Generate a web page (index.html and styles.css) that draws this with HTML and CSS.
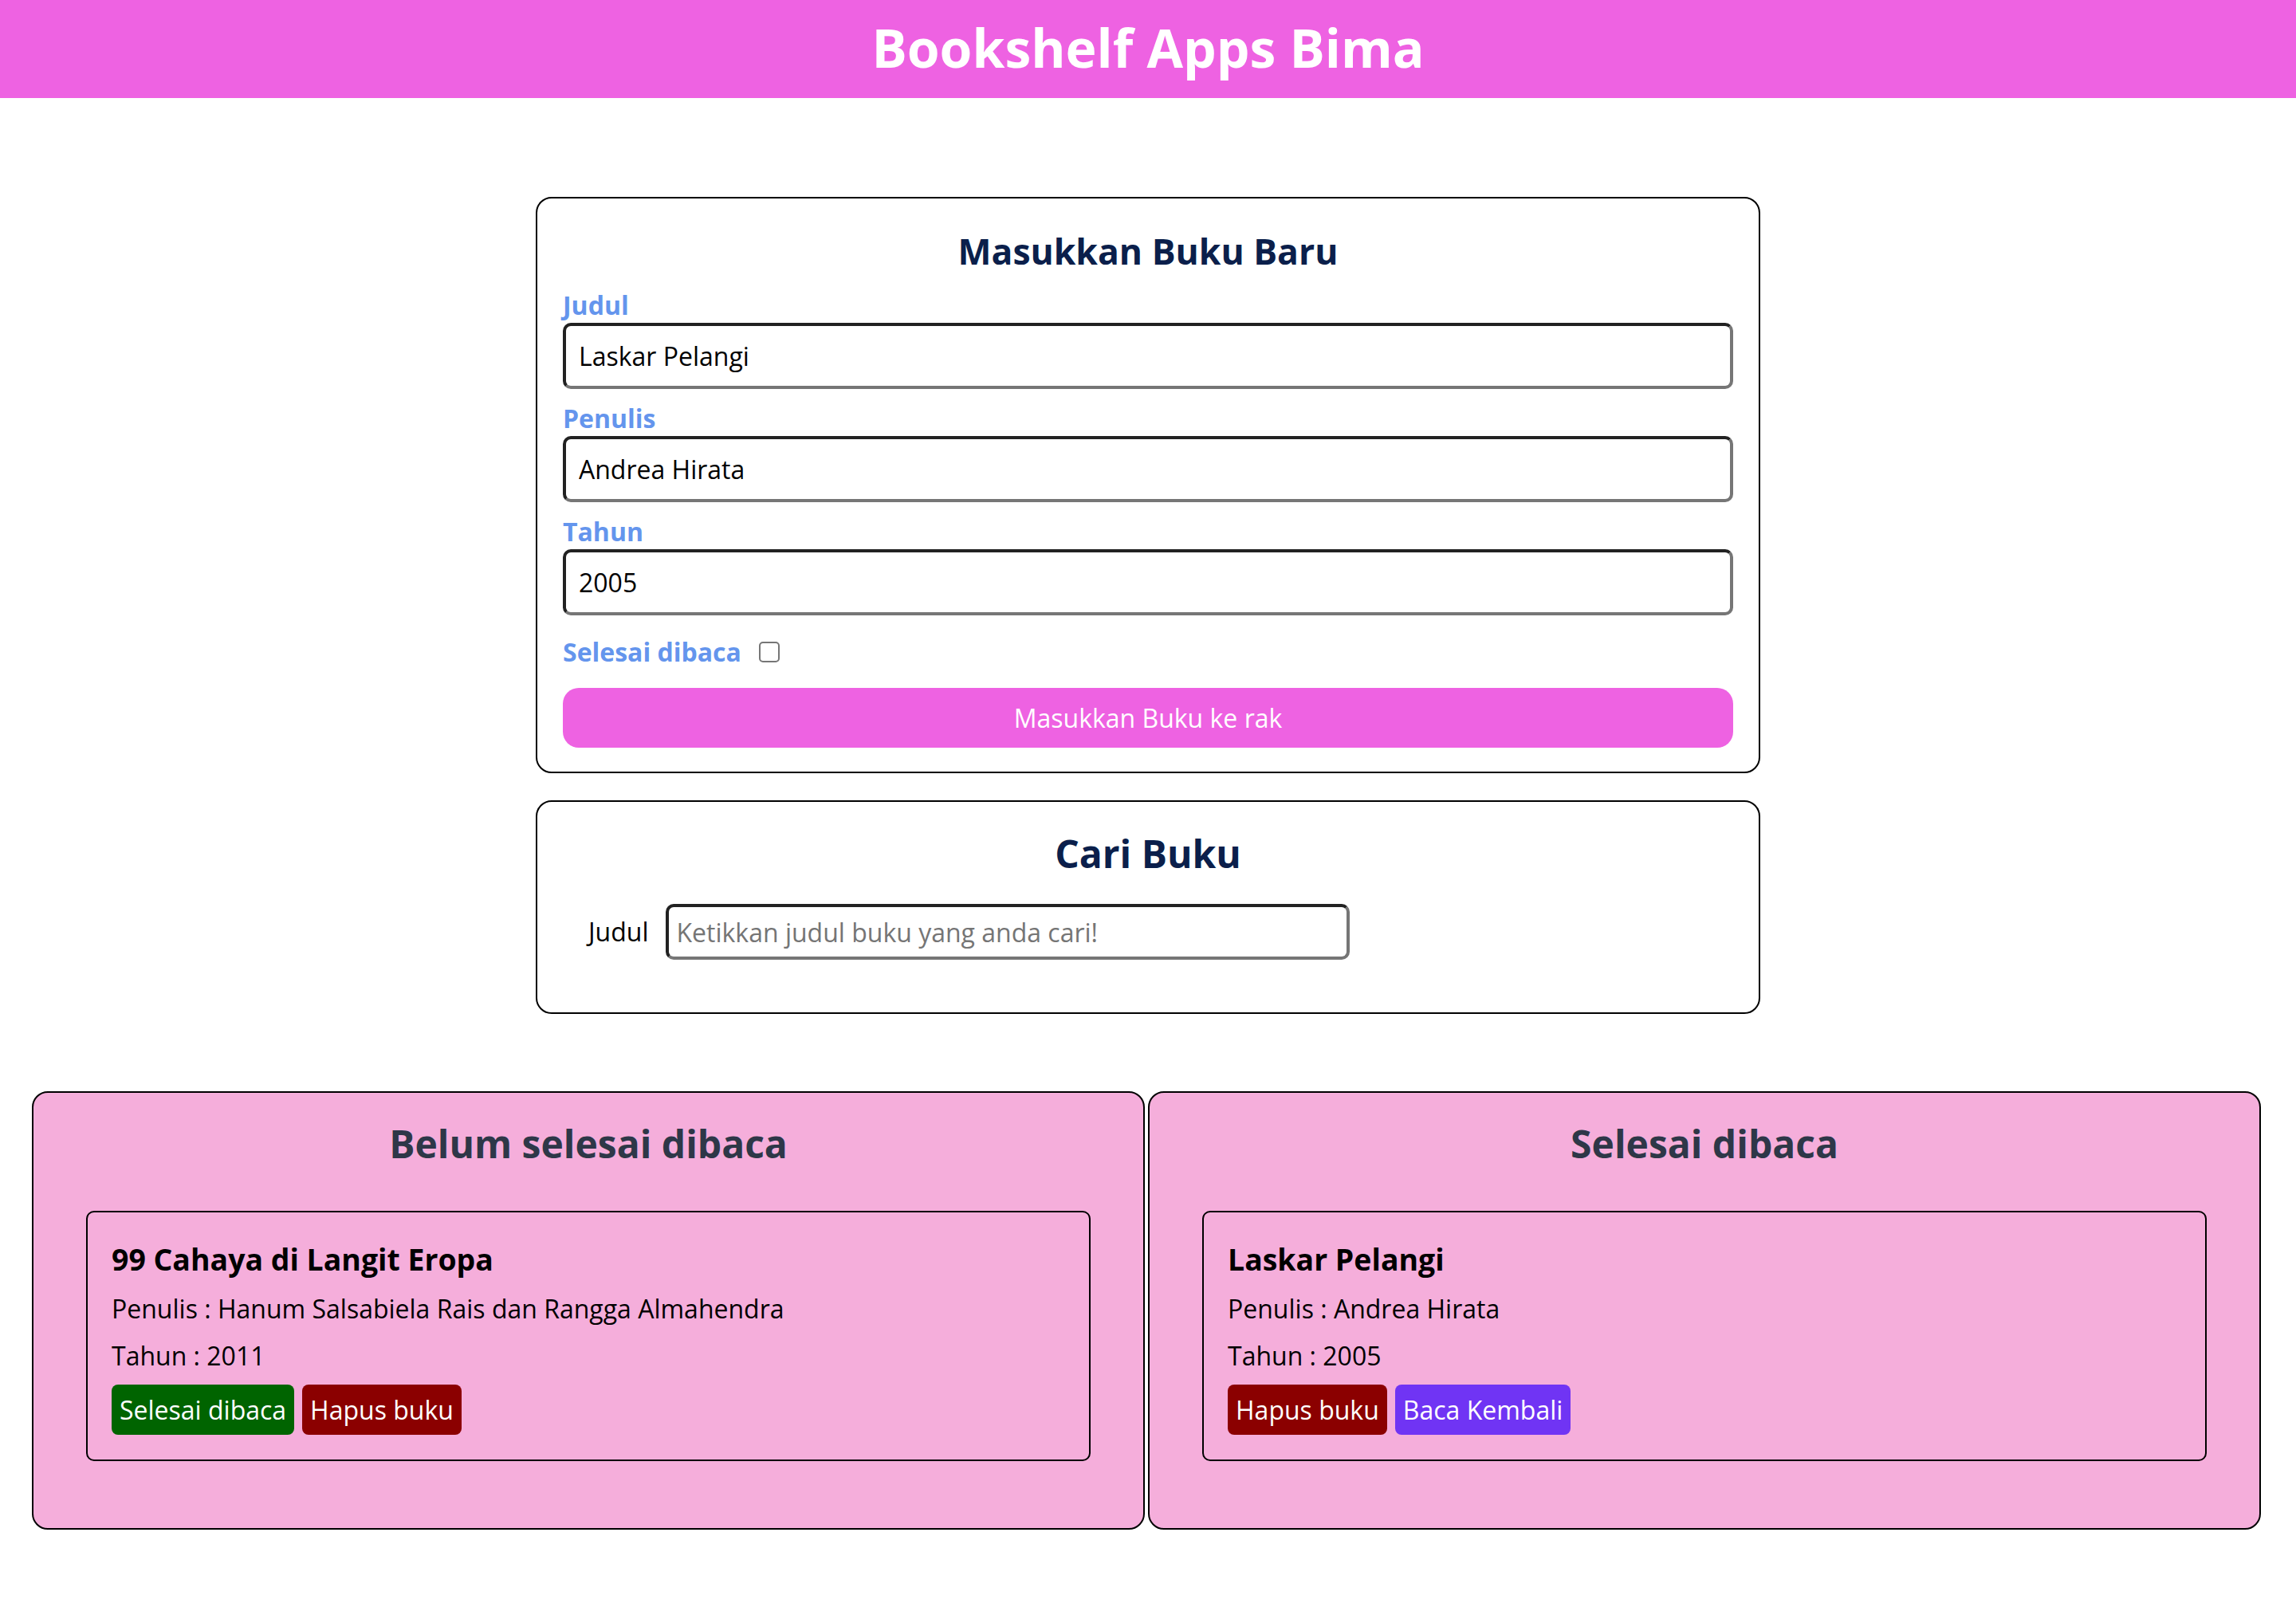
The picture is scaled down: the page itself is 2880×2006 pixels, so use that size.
FILE: index.html
```html
<!DOCTYPE html>
<html lang="id">
<head>
<meta charset="utf-8">
<title>Bookshelf Apps Bima</title>
<link rel="stylesheet" href="styles.css">
</head>
<body>
<header class="app-header">
  <h1 class="app-title">Bookshelf Apps Bima</h1>
</header>
<main class="main">
  <section class="card form-card">
    <h2 class="card-title form-title">Masukkan Buku Baru</h2>
    <form class="book-form">
      <label class="field-label" for="judul">Judul</label>
      <input class="text-input" id="judul" type="text" value="Laskar Pelangi">
      <label class="field-label" for="penulis">Penulis</label>
      <input class="text-input" id="penulis" type="text" value="Andrea Hirata">
      <label class="field-label" for="tahun">Tahun</label>
      <input class="text-input" id="tahun" type="text" value="2005">
      <div class="check-row">
        <label class="field-label check-label" for="selesai">Selesai dibaca</label>
        <input class="checkbox" id="selesai" type="checkbox">
      </div>
      <button class="submit-btn" type="button">Masukkan Buku ke rak</button>
    </form>
  </section>
  <section class="card search-card">
    <h2 class="card-title">Cari Buku</h2>
    <form class="search-form">
      <label class="search-label" for="cari">Judul</label>
      <input class="search-input" id="cari" type="text" placeholder="Ketikkan judul buku yang anda cari!">
    </form>
  </section>
</main>
<section class="shelves">
  <div class="shelf">
    <h2 class="shelf-title">Belum selesai dibaca</h2>
    <article class="book">
      <h3 class="book-title">99 Cahaya di Langit Eropa</h3>
      <p class="book-meta">Penulis : Hanum Salsabiela Rais dan Rangga Almahendra</p>
      <p class="book-meta">Tahun : 2011</p>
      <div class="actions">
        <button class="act green" type="button">Selesai dibaca</button>
        <button class="act red" type="button">Hapus buku</button>
      </div>
    </article>
  </div>
  <div class="shelf">
    <h2 class="shelf-title">Selesai dibaca</h2>
    <article class="book">
      <h3 class="book-title">Laskar Pelangi</h3>
      <p class="book-meta">Penulis : Andrea Hirata</p>
      <p class="book-meta">Tahun : 2005</p>
      <div class="actions">
        <button class="act red" type="button">Hapus buku</button>
        <button class="act violet" type="button">Baca Kembali</button>
      </div>
    </article>
  </div>
</section>
</body>
</html>
```
FILE: styles.css
```css
* { box-sizing: border-box; }

body {
  margin: 0;
  font-family: "Open Sans", "Noto Sans", sans-serif;
  color: #000;
  background: #fff;
}

.app-header {
  height: 123px;
  padding-bottom: 6px;
  background: #ee62e2;
  display: flex;
  align-items: center;
  justify-content: center;
}

.app-title {
  margin: 0;
  color: #fff;
  font-size: 66px;
  font-weight: 700;
  line-height: 1;
}

.main {
  padding-top: 124px;
  display: flex;
  flex-direction: column;
  align-items: center;
  gap: 34px;
}

.card {
  width: 1536px;
  border: 2px solid #000;
  border-radius: 20px;
  background: #fff;
}

.form-card {
  padding: 30px 32px 30px;
}

.card-title {
  margin: 0;
  text-align: center;
  font-size: 48px;
  line-height: 72px;
  font-weight: 700;
  color: #0b1f4b;
}

.form-title {
  font-size: 44.5px;
}

.book-form {
  display: flex;
  flex-direction: column;
}

.field-label {
  display: block;
  font-size: 32px;
  line-height: 40px;
  font-weight: 700;
  color: #6495ed;
}

.book-form > .field-label:first-child { margin-top: 12px; }
.book-form > .field-label { margin-top: 17px; }

.text-input {
  margin-top: 2px;
  height: 83px;
  width: 100%;
  border: 4px solid;
  border-color: #222 #767676 #767676 #222;
  border-radius: 10px;
  padding: 0 16px;
  font-family: inherit;
  font-size: 32px;
  color: #000;
  background: #fff;
}

.check-row {
  display: flex;
  align-items: center;
  margin-top: 26px;
  height: 40px;
}

.check-row .check-label { margin-top: 0; }

.checkbox {
  margin: 0 0 0 22px;
  width: 26px;
  height: 26px;
  appearance: none;
  border: 2px solid #767676;
  border-radius: 5px;
  background: #fff;
}

.submit-btn {
  margin-top: 25px;
  height: 75px;
  width: 100%;
  border: none;
  border-radius: 20px;
  background: #ee62e2;
  color: #fff;
  font-family: inherit;
  font-size: 32px;
}

.search-card {
  padding: 29px 32px 66px;
}

.search-form {
  margin-top: 27px;
  padding-left: 32px;
  display: flex;
  align-items: center;
  gap: 21px;
}

.search-label {
  font-size: 32px;
  line-height: 48px;
  color: #000;
}

.search-input {
  width: 858px;
  height: 70px;
  border: 4px solid;
  border-color: #222 #767676 #767676 #222;
  border-radius: 10px;
  padding: 0 10px;
  font-family: inherit;
  font-size: 32px;
  color: #000;
}

.search-input::placeholder { color: #757575; }

.shelves {
  margin-top: 97px;
  padding-left: 40px;
  display: grid;
  grid-template-columns: 1396px 1396px;
  gap: 4px;
  padding-bottom: 80px;
}

.shelf {
  border: 2px solid #000;
  border-radius: 20px;
  background: #f5aedb;
  padding: 28px 32px 84px;
}

.shelf-title {
  margin: 0;
  text-align: center;
  font-size: 48px;
  line-height: 72px;
  font-weight: 700;
  color: #2e3748;
}

.book {
  margin: 48px 34px 0;
  border: 2px solid #000;
  border-radius: 10px;
  padding: 34px 30px 31px;
}

.book-title {
  margin: 0 0 13px;
  font-size: 37.44px;
  line-height: 50px;
  font-weight: 700;
}

.book-meta {
  margin: 0 0 11px;
  font-size: 32px;
  line-height: 48px;
}

.actions {
  margin-top: 12px;
  display: flex;
  gap: 10px;
}

.act {
  height: 63px;
  padding: 0 10px;
  border: none;
  border-radius: 8px;
  color: #fff;
  font-family: inherit;
  font-size: 32px;
  line-height: 48px;
}

.green { background: #006400; }
.red { background: #8b0000; }
.violet { background: #7034f4; }
```
